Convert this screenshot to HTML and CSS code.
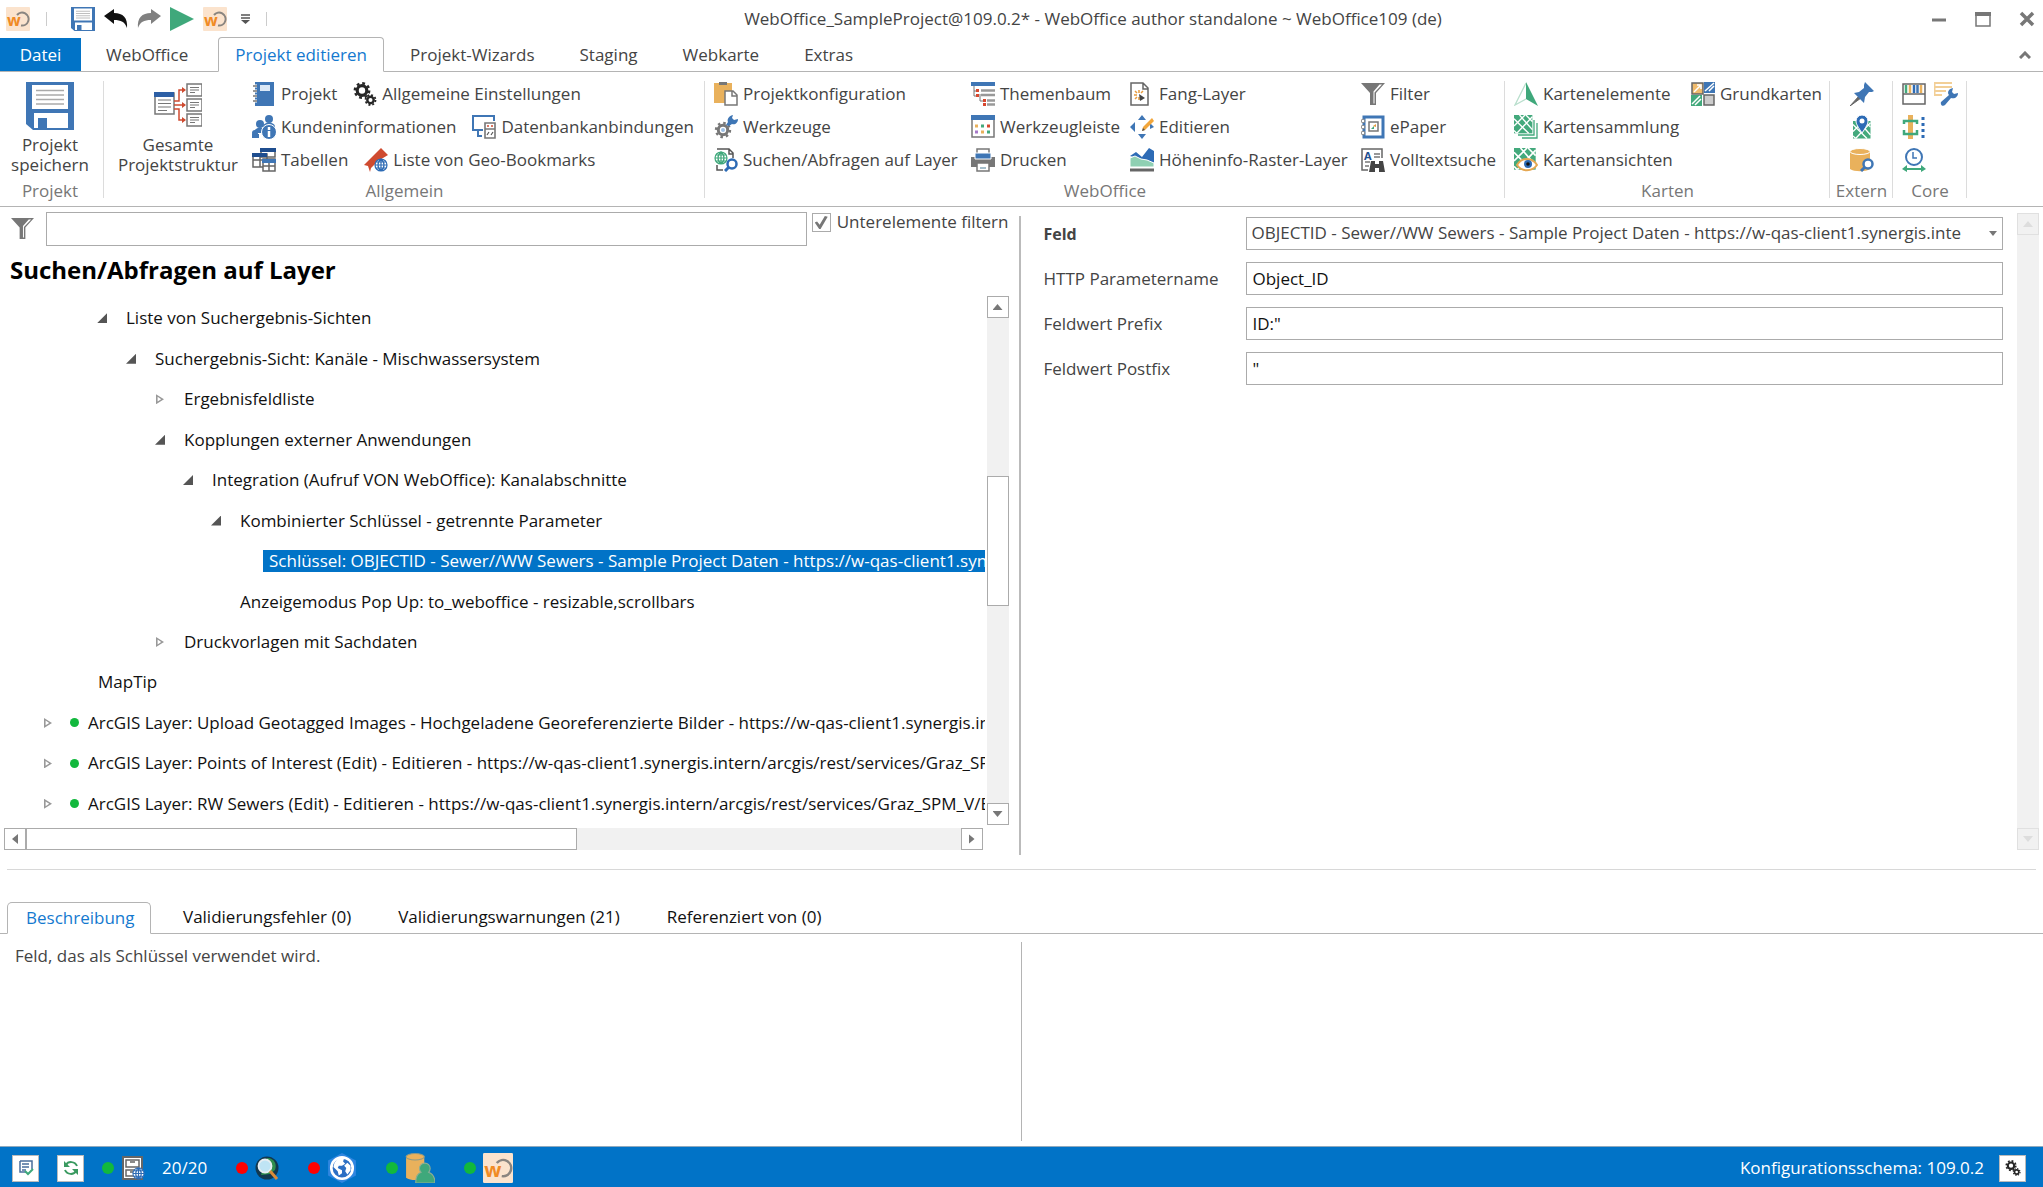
FILE: index.html
```html
<!DOCTYPE html>
<html lang="de">
<head>
<meta charset="utf-8">
<title>WebOffice author standalone</title>
<link rel="stylesheet" href="styles.css">
</head>
<body>
<svg class="defs" aria-hidden="true">
  <symbol id="i-wo" viewBox="0 0 24 24"><rect width="24" height="24" rx="1" fill="#fbe3cd"/><path d="M11 8a6.500 6.500 0 1 1 4 10.500" fill="none" stroke="#8a8580" stroke-width="2"/><text x="1" y="19" class="logo-w">w</text></symbol>
  <symbol id="i-save" viewBox="0 0 48 48"><path d="M0 0h48v48H7l-7-6z" fill="#3f76b5"/><path d="M6 3h36v24H6zM8 31h34v15H8z" fill="#fff"/><path d="M10 8.500h28M10 13h28M10 17.500h28M10 22h28" stroke="#aaa" stroke-width="1.500"/><path d="M12 36h9v12h-9z" fill="#3f76b5"/></symbol>
  <symbol id="i-filter" viewBox="0 0 24 24"><path d="M0 1h24l-9 10v12H9V11z" fill="#777"/><path d="M18.500 2.500H21l-7.500 8v11h-1V9.500z" fill="#fff"/></symbol>
  <symbol id="i-gears" viewBox="0 0 24 24"><g fill="none" stroke="#262626"><circle cx="9" cy="8.500" r="4.800" stroke-width="3.200"/><circle cx="9" cy="8.500" r="7.200" stroke-width="2.400" stroke-dasharray="2.800 2.855"/><circle cx="17.500" cy="18" r="3.200" stroke-width="2.400"/><circle cx="17.500" cy="18" r="5" stroke-width="1.800" stroke-dasharray="1.930 2"/></g></symbol>
  <symbol id="i-globe" viewBox="0 0 14 14"><circle cx="7" cy="7" r="6" fill="#fff"/><path d="M1 7a6 6 0 1 0 12 0A6 6 0 1 0 1 7M7 1v12M1 7h12M2 4h10M2 10h10M7 1C3 4 3 10 7 13M7 1c4 3 4 9 0 12" fill="none" stroke="currentColor" stroke-width="1.200"/></symbol>
  <symbol id="i-map" viewBox="0 0 24 24"><path d="M0 0h20v20H0z" fill="#43a97c"/><path d="M0 4 16 20M6 0l14 16M13 0l7 7M20 2 3 20M12 0 0 12M0 17l3 3" stroke="#fff" stroke-width="1.500"/></symbol>
</svg>

<header class="titlebar">
  <div class="quick">
    <svg class="icon"><use href="#i-wo"/></svg>
    <span class="quick-sep"></span>
    <button type="button" aria-label="Speichern"><svg class="icon"><use href="#i-save"/></svg></button>
    <button type="button" aria-label="Rückgängig"><svg class="icon" viewBox="0 0 24 24"><path d="M0 9 10 2v4c9 0 14 5 13 15-2-6-6-8-13-8v4z" fill="#111"/></svg></button>
    <button type="button" aria-label="Wiederherstellen"><svg class="icon" viewBox="0 0 24 24"><path d="M24 9 14 2v4C5 6 0 11 1 21c2-6 6-8 13-8v4z" fill="#808080"/></svg></button>
    <button type="button" aria-label="Starten"><svg class="icon" viewBox="0 0 24 24"><path d="M0 0 24 12 0 24z" fill="#3fa87b"/></svg></button>
    <button type="button" aria-label="WebOffice"><svg class="icon"><use href="#i-wo"/></svg></button>
    <button type="button" class="quick-menu" aria-label="Anpassen"><svg width="9" height="10" viewBox="0 0 9 10"><path d="M0 1h9M0 4h9" stroke="#555" stroke-width="1.500"/><path d="M0 6h9L4.500 10z" fill="#555"/></svg></button>
    <span class="quick-sep"></span>
  </div>
  <div class="title">WebOffice_SampleProject@109.0.2* - WebOffice author standalone ~ WebOffice109 (de)</div>
  <div class="window-buttons">
    <button type="button" aria-label="Minimieren"><svg width="16" height="16" viewBox="0 0 16 16"><path d="M1 9h14" stroke="#777" stroke-width="3"/></svg></button>
    <button type="button" aria-label="Maximieren"><svg width="16" height="16" viewBox="0 0 16 16"><path d="M1 2h14v13H1z" fill="#fff" stroke="#777" stroke-width="1.500"/><path d="M0 1h16v4H0z" fill="#777"/></svg></button>
    <button type="button" aria-label="Schließen"><svg width="16" height="16" viewBox="0 0 16 16"><path d="M2 2l12 12M14 2 2 14" stroke="#777" stroke-width="3.500"/></svg></button>
  </div>
</header>

<nav class="tabs">
  <button type="button" class="tab-file">Datei</button>
  <button type="button" class="tab">WebOffice</button>
  <button type="button" class="tab tab-active">Projekt editieren</button>
  <button type="button" class="tab">Projekt-Wizards</button>
  <button type="button" class="tab">Staging</button>
  <button type="button" class="tab">Webkarte</button>
  <button type="button" class="tab">Extras</button>
  <button type="button" class="collapse" aria-label="Menüband minimieren"><svg width="12" height="8" viewBox="0 0 12 8"><path d="M1 7l5-5 5 5" fill="none" stroke="#777" stroke-width="3"/></svg></button>
</nav>

<section class="ribbon">
  <div class="group g-project">
    <div class="group-body">
      <button type="button" class="big"><svg class="icon-big"><use href="#i-save"/></svg><span>Projekt speichern</span></button>
    </div>
    <div class="group-name">Projekt</div>
  </div>
  <div class="group g-general">
    <div class="group-body">
      <button type="button" class="big"><svg class="icon-big" viewBox="0 0 48 48"><g fill="#fff" stroke="#777" stroke-width="1.500"><path d="M1 11h19v21H1zM33 2h15v12H33zM33 17h15v12H33zM33 32h15v12H33z"/><path d="M4 18h13M4 21.500h13M4 25h13M4 28.500h9M36 5.500h9M36 8h9M36 10.500h5M36 20.500h9M36 23h9M36 25.500h5M36 35.500h9M36 38h9M36 40.500h5" stroke-width="1.200"/></g><path d="M0 10h20v5H0z" fill="#2d5fa5"/><path d="M20 19h5V8h6M20 23h11M20 27h5v11h6" fill="none" stroke="#cf4b30" stroke-width="1.500"/><path d="M28 5l4 3-4 3zM28 20l4 3-4 3zM28 35l4 3-4 3z" fill="#cf4b30"/></svg><span>Gesamte Projektstruktur</span></button>
      <div class="rows">
        <div class="row">
          <button type="button" class="cmd"><svg class="icon" viewBox="0 0 24 24"><path d="M3 0h19v24H3z" fill="#3f76b5"/><path d="M8 3h10v6H8z" fill="#dbe8f6"/><path d="M0 4h5M0 9h5M0 14h5M0 19h5" stroke="#fff" stroke-width="3"/><path d="M1 4h4M1 9h4M1 14h4M1 19h4" stroke="#777" stroke-width="1.500"/></svg>Projekt</button>
          <button type="button" class="cmd"><svg class="icon"><use href="#i-gears"/></svg>Allgemeine Einstellungen</button>
        </div>
        <div class="row">
          <button type="button" class="cmd"><svg class="icon" viewBox="0 0 24 24"><g fill="#3f76b5"><circle cx="17" cy="4" r="4"/><path d="M11 12c0-6 12-6 12 0z"/><circle cx="8" cy="9" r="4"/><path d="M2 18c0-7 12-7 12 0z"/><circle cx="3" cy="18" r="3"/><path d="M0 19h7v4H0z"/><circle cx="17" cy="17" r="7.500" stroke="#fff"/></g><path d="M17 12v3M17 16v6" stroke="#fff" stroke-width="2.500"/></svg>Kundeninformationen</button>
          <button type="button" class="cmd"><svg class="icon" viewBox="0 0 24 24"><path d="M11 15H1V1h21v5M6 15v6M5 21h5" fill="none" stroke="#3f76b5" stroke-width="2"/><path d="M13 8h10v15H13zM13 14h10" fill="#fff" stroke="#777" stroke-width="1.600"/><path d="M15 11h2M19 11h2" stroke="#cf4b30" stroke-width="1.500"/><path d="M15 20l2-3M19 20l2-3" stroke="#555" stroke-width="1.200"/></svg>Datenbankanbindungen</button>
        </div>
        <div class="row">
          <button type="button" class="cmd"><svg class="icon" viewBox="0 0 24 24"><g fill="#fff" stroke="#666" stroke-width="1.500"><path d="M9 1h14v8H9zM1 6h14v13H1zM1 12h14M8 8v11"/><path d="M11 11h12v12H11zM11 18h12M17 13v10"/></g><path d="M8 0h16v4H8zM0 5h15v4H0z" fill="#1f4e8f"/><path d="M10 11h14v4H10z" fill="#3f76b5"/></svg>Tabellen</button>
          <button type="button" class="cmd"><svg class="icon icon-blue" viewBox="0 0 24 24"><path d="M17 0l7 7-10 6-7 7-1 4-2-6-4-1z" fill="#cf4b30"/><use href="#i-globe" x="10" y="10" width="14" height="14"/></svg>Liste von Geo-Bookmarks</button>
        </div>
      </div>
    </div>
    <div class="group-name">Allgemein</div>
  </div>
  <div class="group g-weboffice">
    <div class="group-body">
      <div class="grid-weboffice">
        <button type="button" class="cmd"><svg class="icon" viewBox="0 0 24 24"><path d="M0 1h18v20H0z" fill="#e9b15c"/><path d="M5 3V0h8v3z" fill="#777"/><path d="M11 9h8l4 4v10H11zM18 9v5h5" fill="#fff" stroke="#777" stroke-width="1.500"/></svg>Projektkonfiguration</button>
        <button type="button" class="cmd"><svg class="icon" viewBox="0 0 24 24"><path d="M0 0h24v4H0z" fill="#3f76b5"/><path d="M3 4v5M3 9h3M9 12v7M9 19h4M3 9v5h5" fill="none" stroke="#777"/><path d="M5 7h3v3H5zM5 12h3v3H5zM12 17h3v3h-3zM12 21h3v3h-3z" fill="#d7482f"/><path d="M10 8.500h14M10 13h14M16 18.500h8M16 22.500h8" stroke="#999" stroke-width="2.500"/></svg>Themenbaum</button>
        <button type="button" class="cmd"><svg class="icon" viewBox="0 0 24 24"><path d="M1 1h12l5 5v17H1zM13 1v6h5" fill="#fff" stroke="#666" stroke-width="1.500"/><path d="M9 8v3M9 15v3M4 13h3M5 9l2 2M13 9l-2 2M5 17l2-2" stroke="#e89b3c" stroke-width="1.500"/><path d="M9 12l6 4-5 3z" fill="#444"/></svg>Fang-Layer</button>
        <button type="button" class="cmd"><svg class="icon"><use href="#i-filter"/></svg>Filter</button>
        <button type="button" class="cmd"><svg class="icon" viewBox="0 0 24 24"><g fill="none" stroke="#777"><circle cx="9" cy="15" r="4.700" stroke-width="3"/><circle cx="9" cy="15" r="7" stroke-width="2.400" stroke-dasharray="2.500 3"/></g><circle cx="9" cy="15" r="2" fill="#9dc0e5"/><path d="M19 0c-5 1-6 5-5 7l-2 3 3 1 3-2c3 1 6-1 6-5l-4 1-2-2z" fill="#3f76b5"/></svg>Werkzeuge</button>
        <button type="button" class="cmd"><svg class="icon" viewBox="0 0 24 24"><path d="M1 1h22v21H1z" fill="#fff" stroke="#777" stroke-width="1.500"/><path d="M0 0h24v5H0z" fill="#3f76b5"/><g stroke-width="3"><path d="M4 11h3M10 17h3" stroke="#e9b15c"/><path d="M10 11h3M16 17h3" stroke="#43a97c"/><path d="M16 11h3" stroke="#d7482f"/><path d="M4 17h3" stroke="#a678c9"/></g></svg>Werkzeugleiste</button>
        <button type="button" class="cmd"><svg class="icon" viewBox="0 0 24 24"><path d="M12 0l4 5H8zM12 24l4-5H8zM0 12l5-5v10zM20 14l4-2-4-4z" fill="#3f76b5"/><path d="M22 3l2 3-9 9-3 1 1-4z" fill="#f2a63b"/><path d="M12 16l1-3 2 2z" fill="#555"/></svg>Editieren</button>
        <button type="button" class="cmd"><svg class="icon" viewBox="0 0 24 24"><path d="M3 2h19v20H3z" fill="#fff" stroke="#3f76b5" stroke-width="3"/><path d="M8 7h9v9H8z" fill="#fff" stroke="#777" stroke-width="1.500"/><path d="M10 14l3-3v3z" fill="#43a97c"/><path d="M12 11l3-2v3z" fill="#e89b3c"/><g fill="#fff" stroke="#888"><circle cx="2" cy="6" r="1.800"/><circle cx="2" cy="12" r="1.800"/><circle cx="2" cy="18" r="1.800"/></g></svg>ePaper</button>
        <button type="button" class="cmd"><svg class="icon icon-green" viewBox="0 0 24 24"><path d="M3 1h12l4 4v5M3 17v5h6M15 1v5h4" fill="none" stroke="#555" stroke-width="1.500"/><use href="#i-globe" x="0" y="3" width="14" height="14"/><circle cx="18" cy="16" r="4.500" fill="#fff" stroke="#2d6bb5" stroke-width="2.500"/><path d="M15 19l-4 4" stroke="#2d6bb5" stroke-width="3"/></svg>Suchen/Abfragen auf Layer</button>
        <button type="button" class="cmd"><svg class="icon" viewBox="0 0 24 24"><path d="M6 1h12v5H6z" fill="#fff" stroke="#777" stroke-width="1.500"/><path d="M0 9h24v10H0z" fill="#777"/><path d="M4 5h16v6H4z" fill="#3f76b5" stroke="#fff"/><path d="M6 15h12v8H6z" fill="#fff" stroke="#777" stroke-width="1.500"/><path d="M9 20h6" stroke="#8ab" stroke-width="1.500"/></svg>Drucken</button>
        <button type="button" class="cmd"><svg class="icon" viewBox="0 0 24 24"><path d="M0 8l6-4 6 5 7-9 5 3v12z" fill="#2d6bb5"/><path d="M0 10l5-2 6 3 6 1 7 3v4H0z" fill="#8fd0b3" stroke="#fff"/><path d="M0 22h24" stroke="#666" stroke-width="3"/></svg>Höheninfo-Raster-Layer</button>
        <button type="button" class="cmd"><svg class="icon" viewBox="0 0 24 24"><path d="M7 22H1V1h20v9" fill="none" stroke="#666" stroke-width="1.500"/><text x="3" y="12" class="icon-letter">A</text><path d="M13 6h6M13 9h6M4 14h5M4 18h4" stroke="#777" stroke-width="1.300"/><path d="M10 13h4v3h4v-3h4l2 11h-6v-4h-4v4H8z" fill="#444"/></svg>Volltextsuche</button>
      </div>
    </div>
    <div class="group-name">WebOffice</div>
  </div>
  <div class="group g-maps">
    <div class="group-body">
      <div class="grid-maps">
        <button type="button" class="cmd"><svg class="icon" viewBox="0 0 24 24"><path d="M12 1 1 23l11-6" fill="none" stroke="#b9dfcd" stroke-width="1.300"/><path d="M12 0l12 24-12-7z" fill="#3fa87b"/></svg>Kartenelemente</button>
        <button type="button" class="cmd"><svg class="icon" viewBox="0 0 24 24"><path d="M1 1h11v11H1z" fill="#f0bb6c" stroke="#666" stroke-width="1.500"/><path d="M13 0h11v11H13z" fill="#3f76b5"/><path d="M0 13h11v11H0z" fill="#43a97c"/><path d="M13 13h10v10H13z" fill="#ccc" stroke="#666" stroke-width="1.500"/><path d="M3 10l6-6M6 3h4v4M14 9l9-8M18 9l5-5M1 22l8-8M4 23l6-6" fill="none" stroke="#fff" stroke-width="1.500"/></svg>Grundkarten</button>
        <button type="button" class="cmd"><svg class="icon" viewBox="0 0 24 24"><use href="#i-map" width="22" height="22"/><path d="M20 5v15H4M23 8v15H8" fill="none" stroke="#43a97c" stroke-width="1.300"/></svg>Kartensammlung</button>
        <button type="button" class="cmd"><svg class="icon" viewBox="0 0 24 24"><use href="#i-map" width="26" height="26"/><path d="M3 17c5-8 15-8 20 0-5 7-15 7-20 0z" fill="#fff" stroke="#e5a752" stroke-width="2"/><circle cx="14" cy="16" r="4" fill="#2d6bb5"/><circle cx="14" cy="16" r="1.800" fill="#111"/></svg>Kartenansichten</button>
      </div>
    </div>
    <div class="group-name">Karten</div>
  </div>
  <div class="group g-extern">
    <div class="group-body icons-only">
      <button type="button" aria-label="Anheften"><svg class="icon" viewBox="0 0 24 24"><path d="M9 14l-9 10 11-8z" fill="#666" stroke="#666"/><path d="M15 0l9 9-2 1-3 0-4 5-1 6L4 11l5-1 5-4V3z" fill="#3f76b5"/></svg></button>
      <button type="button" aria-label="Kartendienst"><svg class="icon" viewBox="0 0 24 24"><use href="#i-map" x="3" y="6" width="21" height="21"/><path d="M12 18C8 12 6 9 6 6a6 6 0 0 1 12 0c0 3-2 6-6 12z" fill="#2d6bb5" stroke="#fff"/><circle cx="12" cy="6" r="2.500" fill="#fff"/></svg></button>
      <button type="button" aria-label="Datenbank durchsuchen"><svg class="icon" viewBox="0 0 24 24"><path d="M0 4h20v17c-4 3-16 3-20 0z" fill="#e9b15c"/><ellipse cx="10" cy="3.500" rx="10" ry="3" fill="#e9b15c" stroke="#fff"/><circle cx="18" cy="16" r="4.500" fill="#fff" stroke="#3f76b5" stroke-width="2.500"/><path d="M15 19l-4 4" stroke="#3f76b5" stroke-width="3"/></svg></button>
    </div>
    <div class="group-name">Extern</div>
  </div>
  <div class="group g-core">
    <div class="group-body icons-only">
      <div class="row"><button type="button" aria-label="Bibliothek"><svg class="icon" viewBox="0 0 24 24"><path d="M1 2h22v20H1zM1 12h22" fill="#fff" stroke="#666" stroke-width="1.500"/><g stroke-width="2.500"><path d="M4 3v8" stroke="#43a97c"/><path d="M8 3v8M19 3v8" stroke="#e9b15c"/><path d="M12 3v8" stroke="#2d6bb5"/><path d="M15.500 3v8" stroke="#3f76b5"/></g></svg></button><button type="button" aria-label="Einstellungen"><svg class="icon" viewBox="0 0 24 24"><path d="M0 1h18M0 5h18M0 9h12M0 13h8M.5 1v12" fill="none" stroke="#f2cf97" stroke-width="2"/><path d="M24 11l-4 1-2-2 1-4c-5 1-6 5-4 7l-8 7c-1 3 2 5 4 3l6-7c4 1 7-1 7-5z" fill="#3f76b5"/></svg></button></div>
      <button type="button" aria-label="Struktur"><svg class="icon" viewBox="0 0 24 24"><path d="M6 0h5v24H6z" fill="#e9b15c"/><path d="M2 9V6h13v3M2 15v4h13v-4" fill="none" stroke="#3fa87b" stroke-width="2.500"/><path d="M21 2v21" stroke="#2d6bb5" stroke-width="3" stroke-dasharray="3 3"/></svg></button>
      <button type="button" aria-label="Zeitplan"><svg class="icon" viewBox="0 0 24 24"><circle cx="12" cy="9" r="8" fill="#fff" stroke="#3f76b5" stroke-width="2"/><path d="M11 4v6h4" fill="none" stroke="#3f76b5" stroke-width="1.500"/><path d="M3 21h18" stroke="#3fa87b" stroke-width="2"/><path d="M0 21l5-4v7zM24 21l-5-4v7z" fill="#3fa87b"/></svg></button>
    </div>
    <div class="group-name">Core</div>
  </div>
</section>

<main class="workspace">
  <section class="pane-left">
    <div class="filter">
      <svg class="icon"><use href="#i-filter"/></svg>
      <input type="text" class="filter-input" aria-label="Filter">
      <label class="check"><input type="checkbox" checked>Unterelemente filtern</label>
    </div>
    <h1>Suchen/Abfragen auf Layer</h1>
    <div class="tree-area">
      <ul class="tree">
        <li class="l1"><i class="open"></i><span>Liste von Suchergebnis-Sichten</span></li>
        <li class="l2"><i class="open"></i><span>Suchergebnis-Sicht: Kanäle - Mischwassersystem</span></li>
        <li class="l3"><i class="closed"></i><span>Ergebnisfeldliste</span></li>
        <li class="l3"><i class="open"></i><span>Kopplungen externer Anwendungen</span></li>
        <li class="l4"><i class="open"></i><span>Integration (Aufruf VON WebOffice): Kanalabschnitte</span></li>
        <li class="l5"><i class="open"></i><span>Kombinierter Schlüssel - getrennte Parameter</span></li>
        <li class="l6"><i></i><span class="selected">Schlüssel: OBJECTID - Sewer//WW Sewers - Sample Project Daten - https://w-qas-client1.synergis.intern</span></li>
        <li class="l5"><i></i><span>Anzeigemodus Pop Up: to_weboffice - resizable,scrollbars</span></li>
        <li class="l3"><i class="closed"></i><span>Druckvorlagen mit Sachdaten</span></li>
        <li class="l0"><i></i><span>MapTip</span></li>
        <li class="layer"><i class="closed"></i><b></b><span>ArcGIS Layer: Upload Geotagged Images - Hochgeladene Georeferenzierte Bilder - https://w-qas-client1.synergis.intern</span></li>
        <li class="layer"><i class="closed"></i><b></b><span>ArcGIS Layer: Points of Interest (Edit) - Editieren - https://w-qas-client1.synergis.intern/arcgis/rest/services/Graz_SPM_V</span></li>
        <li class="layer"><i class="closed"></i><b></b><span>ArcGIS Layer: RW Sewers (Edit) - Editieren - https://w-qas-client1.synergis.intern/arcgis/rest/services/Graz_SPM_V/Editieren</span></li>
      </ul>
      <div class="vscroll">
        <button type="button" aria-label="Nach oben"><span class="up"></span></button>
        <div class="vthumb"></div>
        <button type="button" aria-label="Nach unten"><span class="down"></span></button>
      </div>
    </div>
    <div class="hscroll">
      <button type="button" aria-label="Nach links"><span class="left"></span></button>
      <div class="hthumb"></div>
      <button type="button" aria-label="Nach rechts"><span class="right"></span></button>
    </div>
  </section>
  <section class="pane-right">
    <form class="form">
      <label class="strong" for="feld">Feld</label>
      <div class="select"><select id="feld"><option>OBJECTID - Sewer//WW Sewers - Sample Project Daten - https://w-qas-client1.synergis.inte</option></select><span class="down"></span></div>
      <label for="param">HTTP Parametername</label><input id="param" type="text" value="Object_ID">
      <label for="prefix">Feldwert Prefix</label><input id="prefix" type="text" value="ID:&quot;">
      <label for="postfix">Feldwert Postfix</label><input id="postfix" type="text" value="&quot;">
    </form>
    <div class="vscroll vscroll-off">
      <button type="button" disabled aria-label="Nach oben"><span class="up"></span></button>
      <button type="button" disabled aria-label="Nach unten"><span class="down"></span></button>
    </div>
  </section>
</main>

<section class="details">
  <nav class="detail-tabs">
    <button type="button" class="detail-active">Beschreibung</button>
    <button type="button">Validierungsfehler (0)</button>
    <button type="button">Validierungswarnungen (21)</button>
    <button type="button">Referenziert von (0)</button>
  </nav>
  <div class="detail-body"><p>Feld, das als Schlüssel verwendet wird.</p></div>
</section>

<footer class="status">
  <button type="button" aria-label="Validieren"><svg class="icon-small" viewBox="0 0 16 16"><path d="M2 1h12v8M2 1v11h6M4 4h7M4 7h7M4 10h4" fill="none" stroke="#4a6d9c" stroke-width="1.500"/><path d="M7 11l3 3 5-5" fill="none" stroke="#3fa87b" stroke-width="2"/></svg></button>
  <button type="button" aria-label="Aktualisieren"><svg class="icon-small" viewBox="0 0 16 16"><path d="M14 6C12 1 5 1 3 5M2 10c2 5 9 5 11 1" fill="none" stroke="#3a9a60" stroke-width="2"/><path d="M1 1v6h6zM15 15V9H9z" fill="#3a9a60"/></svg></button>
  <div class="service s1"><b class="green"></b><svg class="icon icon-navy" viewBox="0 0 24 24"><path d="M2 1h19v22H2z" fill="#fff" stroke="#666" stroke-width="2"/><path d="M5 4h13v7H5zM5 14h13v6H5zM9 6h5M9 16h5" fill="none" stroke="#666" stroke-width="1.500"/><use href="#i-globe" x="11" y="11" width="13" height="13"/></svg><span>20/20</span></div>
  <div class="service s2"><b class="red"></b><svg class="icon" viewBox="0 0 24 24"><circle cx="12" cy="12" r="11.500" fill="#12384f"/><path d="M12 2c8 0 10 7 8 12l-5 4-9 1z" fill="#2f8f4e"/><circle cx="10" cy="10" r="6.500" fill="#bfe4f4" stroke="#e8eef2" stroke-width="1.800"/><path d="M15 15l7 8" stroke="#d98b3a" stroke-width="3"/></svg></div>
  <div class="service s3"><b class="red"></b><svg class="icon-mid" viewBox="0 0 28 28"><path d="M14 0l13 7v14l-13 7-13-7V7z" fill="#2f86e0"/><circle cx="14" cy="14" r="10" fill="#2c6fc4" stroke="#fff" stroke-width="2.500"/><path d="M7 9c2-3 5-5 9-4l-1 3 2 2-3 2-3 0-1 2 4 2 0 3-3 2-1-4-4-4zM19 9l3 3v4l-3 4-2-3 1-3-2-2z" fill="#fff"/></svg></div>
  <div class="service s4"><b class="green"></b><svg class="icon-mid" viewBox="0 0 28 28"><path d="M1 3h17v20c-4 3-13 3-17 0z" fill="#e9b15c"/><ellipse cx="9.500" cy="3.500" rx="8.500" ry="3" fill="#e9b15c" stroke="#8d9a86"/><path d="M10 28c0-7 2-9 5-10a5 5 0 1 1 7 0c3 1 6 4 6 10z" fill="#3fa87b" stroke="#8fae93"/></svg></div>
  <div class="service s5"><b class="green"></b><svg class="icon-mid"><use href="#i-wo"/></svg></div>
  <span class="schema">Konfigurationsschema: 109.0.2</span>
  <button type="button" aria-label="Einstellungen"><svg class="icon-small"><use href="#i-gears"/></svg></button>
</footer>
</body>
</html>
```
FILE: styles.css
```css
* { box-sizing: border-box; }
body {
  margin: 0;
  min-height: 100vh;
  display: flex;
  flex-direction: column;
  background: #fff;
  color: #444;
  font: 17px/20px "Open Sans", "Noto Sans", sans-serif;
}
button {
  font: inherit;
  color: inherit;
  background: none;
  border: 0;
  padding: 0;
  display: flex;
  align-items: center;
}
input, select { font: inherit; color: inherit; border-radius: 0; }
.defs { position: absolute; width: 0; height: 0; }
.icon { width: 24px; height: 24px; flex: none; }
.icon-mid { width: 30px; height: 30px; flex: none; }
.icon-big { width: 48px; height: 48px; flex: none; }
.icon-small { width: 16px; height: 16px; flex: none; }
.icon-blue, .icon-navy { color: #2d6bb5; }
.icon-green { color: #3fa87b; }
.logo-w { font: bold 16px "Open Sans", sans-serif; fill: #f08a24; }
.icon-letter { font: bold 11px "Open Sans", sans-serif; fill: #1f4e8f; }

/* Title bar */
.titlebar { display: grid; grid-template-columns: 1fr auto 1fr; align-items: center; height: 37px; padding: 0 8px 0 6px; }
.quick { display: flex; align-items: center; gap: 9px; }
.quick-sep { width: 1px; height: 14px; margin: 0 15px 0 7px; background: #ccc; }
.quick-menu { margin-left: 5px; }
.title { padding-left: 147px; margin-right: 2px; }
.window-buttons { display: flex; justify-content: flex-end; gap: 28px; }

/* Ribbon tabs */
.tabs { display: flex; align-items: flex-end; height: 35px; border-bottom: 1px solid #b4b4b4; }
.tab-file { width: 81px; height: 33px; justify-content: center; background: #0173c7; color: #fff; }
.tab { height: 33px; padding: 0 23px 0 22px; }
.tab-file + .tab { padding-left: 25px; }
.tab-active { height: 35px; margin: 0 4px -1px 7px; padding: 0 16px; border: 1px solid #b4b4b4; border-bottom-color: #fff; border-radius: 4px 4px 0 0; color: #1479cf; }
.collapse { margin: 0 12px 12px auto; }

/* Ribbon */
.ribbon { display: flex; border-bottom: 1px solid #b4b4b4; }
.group { position: relative; padding: 5px 0 0; }
.group::after { content: ""; position: absolute; right: 0; top: 9px; bottom: 8px; width: 1px; background: #dcdcdc; }
.group-body { display: flex; height: 99px; }
.group-name { line-height: 30px; text-align: center; color: #777; }
.g-project { width: 104px; }
.g-project .group-name { padding-right: 4px; }
.g-general { width: 601px; }
.g-weboffice { width: 800px; }
.g-maps { width: 325px; }
.g-extern { width: 63px; }
.g-core { width: 74px; }
.big { flex-direction: column; width: 100px; padding-top: 5px; gap: 5px; }
.g-general .big { width: 148px; }
.cmd { height: 33px; gap: 5px; white-space: nowrap; }
.row { display: flex; height: 33px; gap: 16px; }
.grid-weboffice { display: grid; grid-template-columns: 257px 159px 231px auto; padding-left: 9px; }
.grid-maps { display: grid; grid-template-columns: 177px auto; grid-template-rows: repeat(3, 33px); padding-left: 9px; }
.grid-maps .cmd:nth-child(n + 3) { grid-column: 1; }
.icons-only { flex-direction: column; align-items: center; }
.icons-only button { height: 33px; }
.icons-only .row { gap: 8px; }
.g-core .icons-only { align-items: flex-start; padding-left: 9px; }

/* Workspace */
.workspace { flex: 1; display: grid; grid-template-columns: minmax(0, calc(50% - 1px)) minmax(0, 1fr); margin: 0 4px 14px; }
.pane-left { display: flex; flex-direction: column; padding: 5px 10px 5px 0; border-right: 2px solid #bbb; border-image: linear-gradient(#fff 10px, #bbb 10px) 1; }
.filter { display: flex; align-items: flex-start; height: 34px; padding-left: 7px; }
.filter .icon { margin: 5px 12px 0 0; width: 23px; height: 23px; }
.filter-input { flex: 1; min-width: 0; height: 34px; border: 1px solid #ababab; }
.check { display: flex; gap: 6px; margin-left: 5px; }
.check input { appearance: none; width: 19px; height: 19px; margin: 1px 0 0; border: 1px solid #ababab; display: grid; place-items: center; }
.check input:checked::after { content: ""; width: 13px; height: 13px; background: #777; clip-path: polygon(0 50%, 18% 42%, 38% 68%, 78% 0, 100% 6%, 45% 100%, 34% 100%); }
h1 { margin: 0; padding-left: 6px; font-size: 24px; line-height: 48px; height: 50px; color: #000; }
.tree-area { flex: 1; display: flex; gap: 2px; }
.tree { flex: 1; min-width: 0; overflow: hidden; display: flex; flex-direction: column; list-style: none; margin: 0; padding: 2px 0 1px; color: #111; }
.tree li { flex: 1; min-height: 32px; display: flex; align-items: center; white-space: nowrap; }
.tree i { flex: none; width: 10px; height: 10px; margin-right: 19px; }
.tree .open { background: #555; clip-path: polygon(100% 0, 100% 100%, 0 100%); }
.tree .closed { background: #999; clip-path: polygon(10% 0, 90% 50%, 10% 100%, 10% 80%, 26% 74%, 62% 50%, 26% 26%, 26% 74%, 10% 80%); }
.tree b { flex: none; width: 9px; height: 9px; margin-right: 9px; border-radius: 50%; background: #12b83d; }
.l0 { padding-left: 65px; }
.l1 { padding-left: 93px; }
.l2 { padding-left: 122px; }
.l3 { padding-left: 151px; }
.l4 { padding-left: 179px; }
.l5 { padding-left: 207px; }
.l6 { padding-left: 230px; }
.layer { padding-left: 39px; }
.tree .layer i { margin-right: 17px; }
.selected { padding: 1px 6px; background: #0173c7; color: #fff; }

/* Scrollbars */
.vscroll { display: flex; flex-direction: column; width: 22px; background: #f1f1f1; }
.hscroll { display: flex; height: 22px; margin: 3px 26px 0 0; background: #f1f1f1; }
.vscroll button, .hscroll button { width: 22px; height: 22px; flex: none; justify-content: center; border: 1px solid #ababab; background: #fff; }
.vscroll button:last-child { margin-top: auto; }
.hscroll button:last-child { margin-left: auto; }
.vthumb { height: 130px; margin-top: 158px; border: 1px solid #ababab; background: #fff; }
.hthumb { width: 551px; border: 1px solid #ababab; background: #fff; }
.up, .down { width: 10px; height: 6px; background: #777; clip-path: polygon(50% 0, 100% 100%, 0 100%); }
.down { clip-path: polygon(0 0, 100% 0, 50% 100%); }
.left, .right { width: 6px; height: 10px; background: #777; clip-path: polygon(100% 0, 100% 100%, 0 50%); }
.right { clip-path: polygon(0 0, 100% 50%, 0 100%); }
.vscroll-off button { background: #f1f1f1; border-color: #e0e0e0; }
.vscroll-off span { background: #ddd; }

/* Property form */
.pane-right { display: flex; gap: 14px; padding: 6px 0 5px 23px; }
.form { flex: 1; display: grid; grid-template-columns: 202px minmax(0, 1fr); grid-auto-rows: 33px; row-gap: 12px; align-content: start; align-items: center; padding-top: 4px; }
.form input, .form select { width: 100%; height: 33px; border: 1px solid #ababab; background: #fff; padding: 0 6px; }
.form input { color: #111; }
.select { position: relative; }
.form select { appearance: none; padding: 0 24px 2px 5px; }
.select .down { position: absolute; right: 6px; top: 14px; width: 8px; height: 5px; }
.strong { font-weight: bold; font-size: 16px; }

/* Details */
.details { display: flex; flex-direction: column; height: 277px; }
.detail-tabs { display: flex; align-items: flex-end; height: 65px; padding-left: 7px; border-bottom: 1px solid #b4b4b4; position: relative; color: #111; }
.detail-tabs::before { content: ""; position: absolute; left: 7px; right: 7px; top: 0; height: 1px; background: #d8d8d8; }
.detail-tabs button { height: 32px; padding: 0 22px 0 25px; }
.detail-tabs .detail-active { width: 144px; margin: 0 7px -1px 0; padding: 0 0 0 18px; border: 1px solid #b4b4b4; border-bottom-color: #fff; border-radius: 5px 5px 0 0; color: #1479cf; }
.detail-body { flex: 1; display: grid; grid-template-columns: 1fr 1fr; margin: 8px 0 5px; }
.detail-body p { margin: 0; padding: 4px 15px; border-right: 1px solid #b4b4b4; }

/* Status bar */
.status { display: flex; align-items: center; height: 41px; padding: 2px 17px 0 12px; border-top: 1px solid #8fa9bd; background: #0173c7; color: #fff; }
.status button { width: 27px; height: 27px; justify-content: center; background: #fff; border: 1px solid #bbb; }
.status button:nth-child(2) { margin: 0 18px; }
.service { display: flex; align-items: center; }
.service b { width: 12px; height: 12px; margin-right: 7px; border-radius: 50%; }
.green { background: #12b83d; }
.red { background: #f00; }
.service span { margin-left: 17px; }
.s1 { width: 134px; }
.s2 { width: 72px; }
.s3, .s4 { width: 78px; }
.schema { margin: 0 15px 0 auto; }
```
